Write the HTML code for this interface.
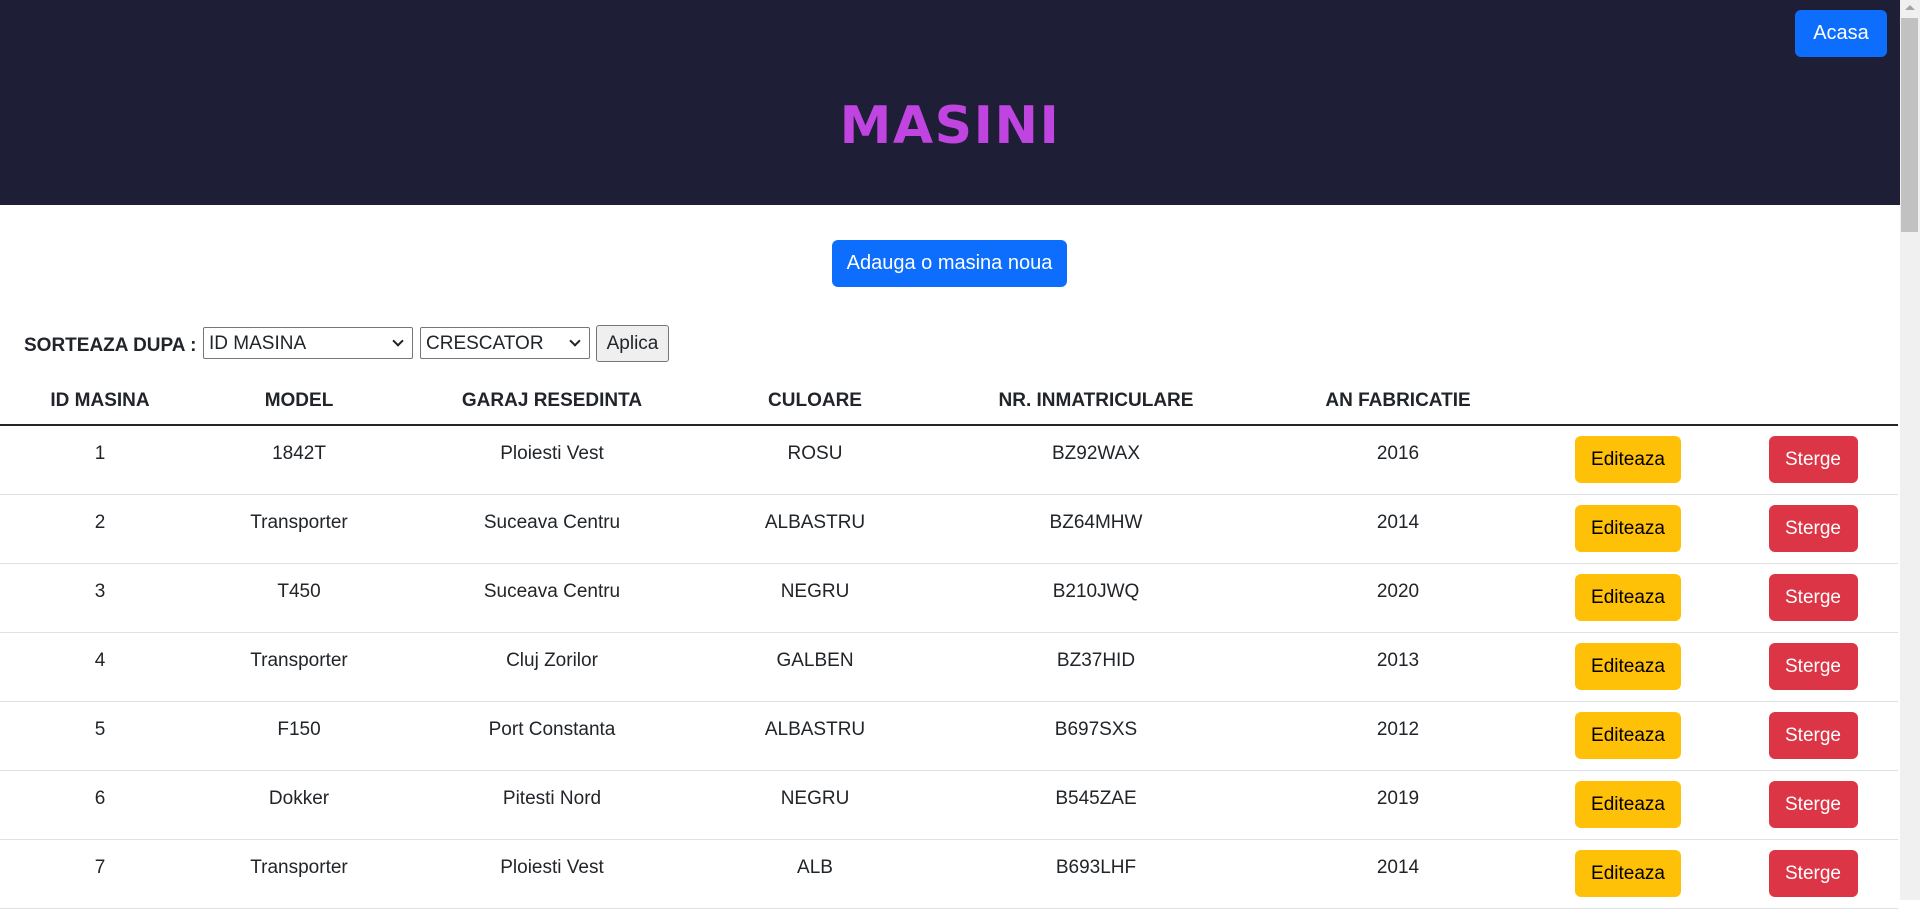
<!DOCTYPE html>
<html><head><meta charset="utf-8">
<style>
*{box-sizing:border-box;margin:0;padding:0}
html,body{width:1920px;height:900px;overflow:hidden;background:#fff;font-family:"Liberation Sans",sans-serif;color:#212529}
.hdr{position:absolute;left:0;top:0;width:1900px;height:205px;background:#1f1e37}
.title{position:absolute;left:0;width:1900px;top:96px;text-align:center;font-family:"DejaVu Sans",sans-serif;font-weight:bold;font-size:52px;line-height:60px;color:#c044e0;letter-spacing:1.5px}
.btn{position:absolute;border-radius:6px;font-size:20px;display:flex;align-items:center;justify-content:center}
.blue{background:#0d6efd;color:#fff}
.acasa{left:1795px;top:10px;width:92px;height:47px}
.add{left:832px;top:240px;width:235px;height:47px}
.sb{position:absolute;left:1900px;top:0;width:20px;height:900px;background:#f0f0f0}
.thumb{position:absolute;left:1901px;top:18px;width:17px;height:214px;background:#c1c1c1}
.arrow{position:absolute;left:1905px;top:5px;width:0;height:0;border-left:5px solid transparent;border-right:5px solid transparent;border-bottom:5px solid #a3a3a3}
.sort{position:absolute;left:24px;top:335px;font-weight:bold;font-size:19px}
.sel{position:absolute;top:327px;height:32px;border:1px solid #767676;border-radius:2px;font-size:19px;padding:4px 5px;line-height:24px;background:#fff}
.sel:after{content:"";position:absolute;right:10px;top:9px;width:6px;height:6px;border-right:2px solid #222;border-bottom:2px solid #222;transform:rotate(45deg)}
.apl{position:absolute;left:596px;top:325px;width:73px;height:37px;border:1px solid #767676;border-radius:3px;background:#efefef;font-size:19px;display:flex;align-items:center;justify-content:center}
table{position:absolute;left:0;top:378px;width:1898px;border-collapse:collapse;font-size:19px}
th{height:47px;font-weight:bold;border-bottom:2px solid #212529;text-align:center;vertical-align:middle}
td{height:69px;border-bottom:1px solid #dee2e6;text-align:center;vertical-align:top;padding-top:17px;position:relative}
.e,.s{display:inline-block;height:47px;line-height:47px;border-radius:6px;font-size:19px;margin-top:-7px}
.e{background:#ffc107;color:#000;width:106px}
.s{background:#dc3545;color:#fff;width:89px}
</style></head><body>
<div class="hdr"></div>
<div class="title">MASINI</div>
<div class="btn blue acasa">Acasa</div>
<div class="btn blue add">Adauga o masina noua</div>
<div class="sort">SORTEAZA DUPA :</div>
<div class="sel" style="left:203px;width:210px">ID MASINA</div>
<div class="sel" style="left:420px;width:170px">CRESCATOR</div>
<div class="apl">Aplica</div>
<table>
<colgroup><col style="width:200px"><col style="width:198px"><col style="width:308px"><col style="width:218px"><col style="width:344px"><col style="width:260px"><col style="width:200px"><col style="width:170px"></colgroup>
<tr><th>ID MASINA</th><th>MODEL</th><th>GARAJ RESEDINTA</th><th>CULOARE</th><th>NR. INMATRICULARE</th><th>AN FABRICATIE</th><th></th><th></th></tr>
<tr><td>1</td><td>1842T</td><td>Ploiesti Vest</td><td>ROSU</td><td>BZ92WAX</td><td>2016</td><td><span class="e">Editeaza</span></td><td><span class="s">Sterge</span></td></tr>
<tr><td>2</td><td>Transporter</td><td>Suceava Centru</td><td>ALBASTRU</td><td>BZ64MHW</td><td>2014</td><td><span class="e">Editeaza</span></td><td><span class="s">Sterge</span></td></tr>
<tr><td>3</td><td>T450</td><td>Suceava Centru</td><td>NEGRU</td><td>B210JWQ</td><td>2020</td><td><span class="e">Editeaza</span></td><td><span class="s">Sterge</span></td></tr>
<tr><td>4</td><td>Transporter</td><td>Cluj Zorilor</td><td>GALBEN</td><td>BZ37HID</td><td>2013</td><td><span class="e">Editeaza</span></td><td><span class="s">Sterge</span></td></tr>
<tr><td>5</td><td>F150</td><td>Port Constanta</td><td>ALBASTRU</td><td>B697SXS</td><td>2012</td><td><span class="e">Editeaza</span></td><td><span class="s">Sterge</span></td></tr>
<tr><td>6</td><td>Dokker</td><td>Pitesti Nord</td><td>NEGRU</td><td>B545ZAE</td><td>2019</td><td><span class="e">Editeaza</span></td><td><span class="s">Sterge</span></td></tr>
<tr><td>7</td><td>Transporter</td><td>Ploiesti Vest</td><td>ALB</td><td>B693LHF</td><td>2014</td><td><span class="e">Editeaza</span></td><td><span class="s">Sterge</span></td></tr>
</table>
<div class="sb"></div><div class="thumb"></div><div class="arrow"></div>
</body></html>
